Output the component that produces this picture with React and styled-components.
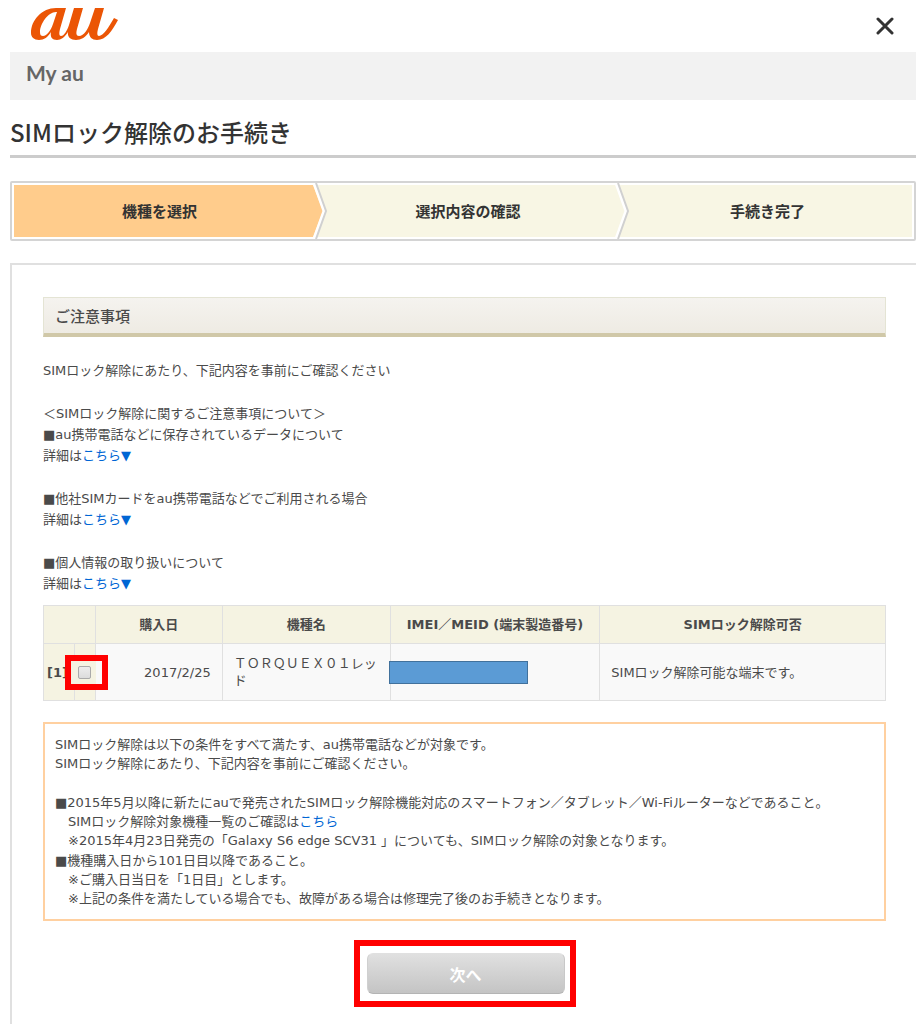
import React, { useState } from 'react';
import styled, { createGlobalStyle, css } from 'styled-components';

const GlobalStyle = createGlobalStyle`
    * {
        box-sizing: border-box;
    }

    body {
        margin: 0;
        background: #fff;
        color: #4a4a4a;
        font-family: "DejaVu Sans", "Noto Sans CJK JP", sans-serif;
        font-size: 13px;
        line-height: 21px;
    }
`

const steps = ['機種を選択', '選択内容の確認', '手続き完了'];

const notices = [
    ['＜SIMロック解除に関するご注意事項について＞', '■au携帯電話などに保存されているデータについて'],
    ['■他社SIMカードをau携帯電話などでご利用される場合'],
    ['■個人情報の取り扱いについて'],
];

const devices = [
    { id: 1, date: '2017/2/25', model: 'ＴＯＲＱＵＥＸ０１レッド', status: 'SIMロック解除可能な端末です。' },
];

const stepColor = (active) => (active ? '#ffcc8c' : '#f8f6e4');

const Logo = () => (
    <svg width="88" height="34" viewBox="0 0 88 34" role="img" aria-label="au">
        <path
            fill="#eb5505"
            fillRule="evenodd"
            d="M44 1H53L47 22C46 26 46 29 49 29C54 29 58 22 60 16L65 1H74L68 22C67 26 67 29 69 29C73 29 79 20 84 11L88 13C82 24 76 33 67 33C62 33 59 30 59 25C56 30 51 33 46 33C41 33 37 30 38 25C35 30 31 33 27 33C22 33 20 30 21 25C18 30 14 33 9 33C4 33 1 30 1 26C1 13 12 1 26 1H36L30 22C29 26 29 29 31 29C34 29 37 24 39 18ZM26 5C18 5 10 17 10 25C10 28 11 29 13 29C17 29 21 23 23 17L27 5Z"
        />
    </svg>
);

const StepArrow = ({ active }) => (
    <Arrow viewBox="0 0 16 56" aria-hidden="true">
        <path d="M-1 2H0L10 28 0 54H-1Z" fill={stepColor(active)} />
        <path d="M1 0 11 28 1 56" fill="none" stroke="#fff" strokeWidth="3" />
        <path d="M3 0 13 28 3 56" fill="none" stroke="#d0d0d0" strokeWidth="2" />
    </Arrow>
);

const App = () => {

    const [checked, setChecked] = useState(false);

    return (
        <Page>
            <GlobalStyle />
            <Header>
                <Logo />
                <CloseButton type="button" aria-label="閉じる">
                    <svg width="18" height="18" viewBox="0 0 18 18" fill="none" stroke="#333" strokeWidth="3" strokeLinecap="round">
                        <path d="M2 2l14 14M16 2L2 16" />
                    </svg>
                </CloseButton>
            </Header>
            <SiteBar>My au</SiteBar>
            <Title>SIMロック解除のお手続き</Title>

            <Steps>
                {steps.map((step, i) => (
                    <Step key={step} $active={i === 0}>
                        {step}
                        {i < steps.length - 1 && <StepArrow active={i === 0} />}
                    </Step>
                ))}
            </Steps>

            <Panel>
                <SectionTitle>ご注意事項</SectionTitle>
                <Notices>
                    <p>SIMロック解除にあたり、下記内容を事前にご確認ください</p>
                    {notices.map((lines) => (
                        <div key={lines[0]}>
                            {lines.map((line) => <p key={line}>{line}</p>)}
                            <p>詳細は<Link href="#detail">こちら▼</Link></p>
                        </div>
                    ))}
                </Notices>

                <DeviceTable>
                    <colgroup>
                        <Col $share={31} />
                        <Col $share={21} />
                        <Col $share={127} />
                        <Col $share={168} />
                        <Col $share={210} />
                        <Col $share={286} />
                    </colgroup>
                    <thead>
                        <tr>
                            <th colSpan={2} aria-label="選択"></th>
                            <th>購入日</th>
                            <th>機種名</th>
                            <th>IMEI／MEID (端末製造番号)</th>
                            <th>SIMロック解除可否</th>
                        </tr>
                    </thead>
                    <tbody>
                        {devices.map((device) => (
                            <tr key={device.id}>
                                <NumberCell>
                                    <label htmlFor={`device-${device.id}`}>[{device.id}]</label>
                                </NumberCell>
                                <CheckCell>
                                    <CheckMarker />
                                    <CheckBox
                                        id={`device-${device.id}`}
                                        type="checkbox"
                                        checked={checked}
                                        onChange={(e) => setChecked(e.target.checked)}
                                    />
                                </CheckCell>
                                <DateCell>{device.date}</DateCell>
                                <td>{device.model}</td>
                                <ImeiCell><Mask /></ImeiCell>
                                <td>{device.status}</td>
                            </tr>
                        ))}
                    </tbody>
                </DeviceTable>

                <Terms>
                    <div>
                        <p>SIMロック解除は以下の条件をすべて満たす、au携帯電話などが対象です。</p>
                        <p>SIMロック解除にあたり、下記内容を事前にご確認ください。</p>
                    </div>
                    <ul>
                        <li>
                            <p>■2015年5月以降に新たにauで発売されたSIMロック解除機能対応のスマートフォン／タブレット／Wi-Fiルーターなどであること。</p>
                            <SubLine>SIMロック解除対象機種一覧のご確認は<Link href="#models">こちら</Link></SubLine>
                            <SubLine>※2015年4月23日発売の「Galaxy S6 edge SCV31 」についても、SIMロック解除の対象となります。</SubLine>
                        </li>
                        <li>
                            <p>■機種購入日から101日目以降であること。</p>
                            <SubLine>※ご購入日当日を「1日目」とします。</SubLine>
                            <SubLine>※上記の条件を満たしている場合でも、故障がある場合は修理完了後のお手続きとなります。</SubLine>
                        </li>
                    </ul>
                </Terms>

                <NextFrame>
                    <NextButton type="button">次へ</NextButton>
                </NextFrame>
            </Panel>
        </Page>
    );
}

const Page = styled.div`
    padding-left: 10px;

    p {
        margin: 0;
    }
`

const Header = styled.header`
    display: flex;
    justify-content: space-between;
    align-items: center;
    height: 52px;
    padding: 0 20px;

    > svg {
        margin-bottom: 4px;
    }
`

const CloseButton = styled.button`
    display: flex;
    padding: 2px;
    border: 0;
    background: none;
    cursor: pointer;
`

const SiteBar = styled.div`
    height: 48px;
    padding: 10px 16px;
    background: #f2f2f2;
    color: #666;
    font-family: Lato, sans-serif;
    font-size: 21px;
    font-weight: 700;
`

const Title = styled.h1`
    margin: 0;
    padding: 16px 0 7px;
    border-bottom: 3px solid #ccc;
    color: #333;
    font-family: "Noto Sans CJK JP", sans-serif;
    font-size: 24px;
    font-weight: 500;
    line-height: 32px;
`

const Steps = styled.div`
    display: grid;
    grid-template-columns: 299fr 302fr 297fr;
    height: 60px;
    margin-top: 23px;
    padding: 2px;
    border: 2px solid #d4d4d4;
    border-radius: 2px;
`

const Step = styled.div`
    position: relative;
    display: flex;
    justify-content: center;
    align-items: center;
    padding: 0 0 2px 8px;
    background: ${({ $active }) => stepColor($active)};
    color: #333;
    font-family: "Noto Sans CJK JP", sans-serif;
    font-size: 15px;
    font-weight: 700;

    &:first-child {
        padding: 0 8px 2px 0;
    }
`

const Arrow = styled.svg`
    position: absolute;
    z-index: 1;
    top: -2px;
    left: 100%;
    width: 16px;
    height: 56px;
`

const Panel = styled.main`
    margin-top: 22px;
    padding: 32px 30px 17px 31px;
    border-top: 2px solid #e0e0e0;
    border-left: 2px solid #e0e0e0;
`

const SectionTitle = styled.h2`
    margin: 0;
    padding: 8px 11px 7px;
    border: 1px solid #e4e4d4;
    border-bottom: 4px solid #d0c8a8;
    background: linear-gradient(#f5f3ef, #eeebe3);
    font-family: "Noto Sans CJK JP", sans-serif;
    font-size: 15px;
    font-weight: 500;
    line-height: 20px;
`

const Notices = styled.div`
    display: grid;
    gap: 22px;
    margin-top: 23px;
`

const Link = styled.a`
    color: #0066d4;
    text-decoration: none;
`

const Col = styled.col`
    width: calc(100% * ${({ $share }) => $share} / 843);
`

const DeviceTable = styled.table`
    width: 100%;
    margin-top: 11px;
    border-collapse: collapse;
    table-layout: fixed;
    line-height: 17px;

    th, td {
        border: 1px solid #e0e0e0;
    }

    th {
        height: 38px;
        padding: 0;
        background: #f5f3e2;
        font-weight: 700;
    }

    td {
        height: 57px;
        padding: 0 11px;
        background: #f9f9f9;
    }
`

const pickCell = css`
    && {
        padding: 0;
        background: #f5f3e2;
    }
`

const NumberCell = styled.td`
    ${pickCell}
    font-weight: 700;

    label {
        padding-left: 3px;
    }
`

const CheckCell = styled.td`
    ${pickCell}
    position: relative;
`

const CheckMarker = styled.span`
    position: absolute;
    top: 11px;
    left: -10px;
    width: 43px;
    height: 35px;
    border: 6px solid #f00;
    background: linear-gradient(90deg, #f5f3e2 25px, #f9f9f9 25px);
    pointer-events: none;
`

const CheckBox = styled.input`
    position: relative;
    display: block;
    appearance: none;
    width: 13px;
    height: 13px;
    margin: 0 auto;
    border: 1px solid #aaa;
    border-radius: 2px;
    background: linear-gradient(#ededed, #dcdcdc);

    &:checked {
        background: #0066d4;
    }
`

const DateCell = styled.td`
    text-align: right;
`

const ImeiCell = styled.td`
    position: relative;
`

const Mask = styled.span`
    position: absolute;
    top: 17px;
    left: -2px;
    width: 139px;
    height: 23px;
    border: 1px solid #41719c;
    background: #5b9bd5;
`

const Terms = styled.section`
    display: grid;
    gap: 20px;
    margin-top: 21px;
    padding: 11px 10px;
    border: 2px solid #ffd0a0;
    line-height: 19px;

    ul {
        display: grid;
        gap: 1px;
        margin: 0;
        padding: 0;
        list-style: none;
    }
`

const SubLine = styled.p`
    padding-left: 13px;
`

const NextFrame = styled.div`
    width: fit-content;
    margin: 19px auto 0;
    padding: 7px 5px 7px 7px;
    border: 6px solid #f00;
`

const NextButton = styled.button`
    display: block;
    width: 198px;
    height: 41px;
    border: 1px solid #ccc;
    border-color: #e0e0e0 #c8c8c8 #b4b4b4 #d0d0d0;
    border-radius: 6px;
    background: linear-gradient(#e0e0e0, #c4c4c4);
    color: #fff;
    font-family: "Noto Sans CJK JP", sans-serif;
    font-size: 16px;
    font-weight: 700;
    cursor: pointer;
`
export default App;
